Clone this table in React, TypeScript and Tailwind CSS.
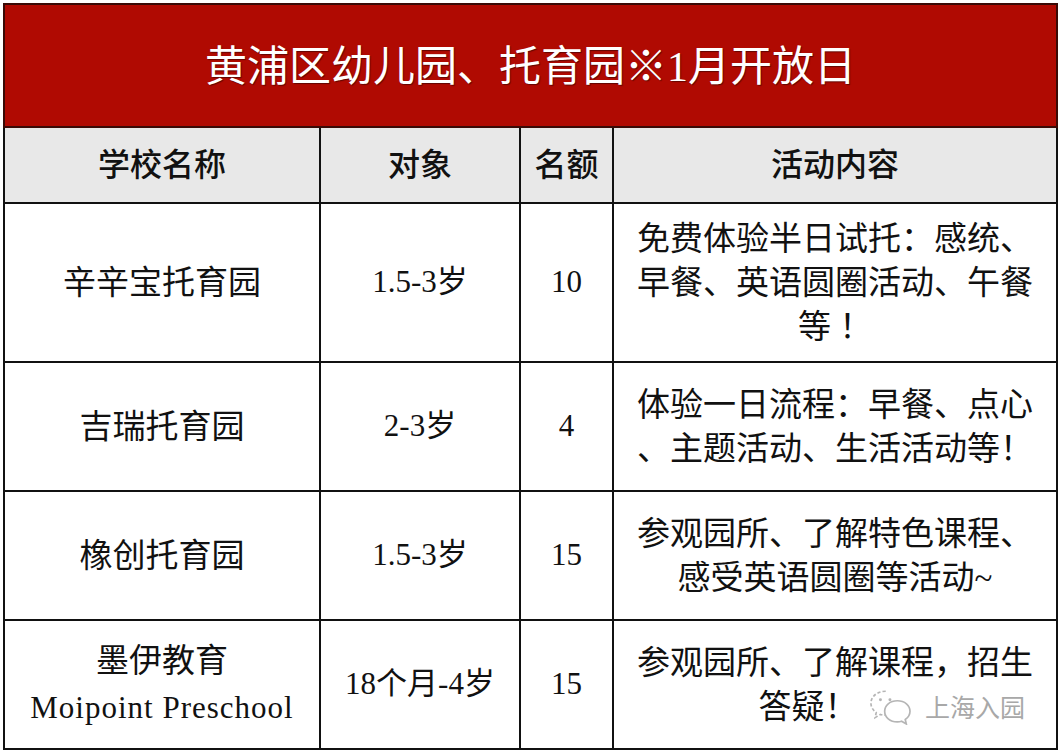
import React from 'react';

const cjk = { fontFamily: '"Liberation Serif", "Noto Sans CJK SC", serif' };

type Row = { name: React.ReactNode; target: string; quota: string; content: React.ReactNode; h: string };

const rows: Row[] = [
  {
    name: '辛辛宝托育园',
    target: '1.5-3岁',
    quota: '10',
    h: 'h-[159px]',
    content: (
      <>
        免费体验半日试托：感统、<br />早餐、英语圆圈活动、午餐<br />等 ！
      </>
    ),
  },
  {
    name: '吉瑞托育园',
    target: '2-3岁',
    quota: '4',
    h: 'h-[129px]',
    content: (
      <>
        体验一日流程：早餐、点心<br />、主题活动、生活活动等！
      </>
    ),
  },
  {
    name: '橡创托育园',
    target: '1.5-3岁',
    quota: '15',
    h: 'h-[129px]',
    content: (
      <>
        参观园所、了解特色课程、<br />感受英语圆圈等活动~
      </>
    ),
  },
  {
    name: (
      <>
        墨伊教育<br />
        <span className="text-[31px] tracking-[1px]">Moipoint Preschool</span>
      </>
    ),
    target: '18个月-4岁',
    quota: '15',
    h: 'h-[129px]',
    content: (
      <>
        参观园所、了解课程，招生<br />
        <span className="inline-block pr-[54px]">答疑！</span>
      </>
    ),
  },
];

function Watermark() {
  return (
    <div className="absolute left-[253px] top-[66px] flex items-center gap-[10px] text-[#a8a8a8]">
      <svg width="48" height="38" viewBox="0 0 44 36" fill="none" stroke="#b5b5b5" strokeWidth="1.6">
        <path d="M17 4C9 4 3 9 3 15.5c0 3.6 2 6.6 5 8.6L7 29l5-3c1.6.5 3.3.7 5 .7" strokeDasharray="3 2" />
        <path d="M28 13c-7 0-12 4.4-12 10s5 10 12 10c1.4 0 2.8-.2 4-.6l4.5 2.6-1-4.2c2.7-1.8 4.5-4.7 4.5-7.8 0-5.6-5-10-12-10z" />
        <circle cx="12" cy="12" r="1.4" fill="#b5b5b5" stroke="none" />
        <circle cx="21" cy="12" r="1.4" fill="#b5b5b5" stroke="none" />
      </svg>
      <span className="text-[25px] leading-none" style={{ fontFamily: '"Noto Sans CJK SC", sans-serif' }}>上海入园</span>
    </div>
  );
}

export default function App() {
  return (
    <div className="w-[1061px] h-[753px] bg-white pt-[3px] pl-[3px]" style={cjk}>
      <table className="table-fixed border-collapse w-[1053px] text-[#111] text-[33px]">
        <colgroup>
          <col className="w-[316px]" />
          <col className="w-[200px]" />
          <col className="w-[93px]" />
          <col className="w-[444px]" />
        </colgroup>
        <tbody>
          <tr className="h-[123px]">
            <td
              colSpan={4}
              className="border-2 border-[#3a0a06] bg-[#b00a02] text-center text-white text-[42px] pt-[4px] [text-shadow:1px_1px_1px_rgba(0,0,0,0.45)]"
            >
              黄浦区幼儿园、托育园※1月开放日
            </td>
          </tr>
          <tr className="h-[76px] bg-[#e8e8e8] text-[32px] font-medium">
            <td className="border-2 border-[#111] text-center">学校名称</td>
            <td className="border-2 border-[#111] text-center">对象</td>
            <td className="border-2 border-[#111] text-center">名额</td>
            <td className="border-2 border-[#111] text-center">活动内容</td>
          </tr>
          {rows.map((r, i) => (
            <tr key={i} className={r.h}>
              <td className="border-2 border-[#111] text-center leading-[46px]">{r.name}</td>
              <td className="border-2 border-[#111] text-center text-[31px]">{r.target}</td>
              <td className="border-2 border-[#111] text-center text-[31px]">{r.quota}</td>
              <td className="border-2 border-[#111] text-center leading-[44px] relative">
                {r.content}
                {i === 3 && <Watermark />}
              </td>
            </tr>
          ))}
        </tbody>
      </table>
    </div>
  );
}
